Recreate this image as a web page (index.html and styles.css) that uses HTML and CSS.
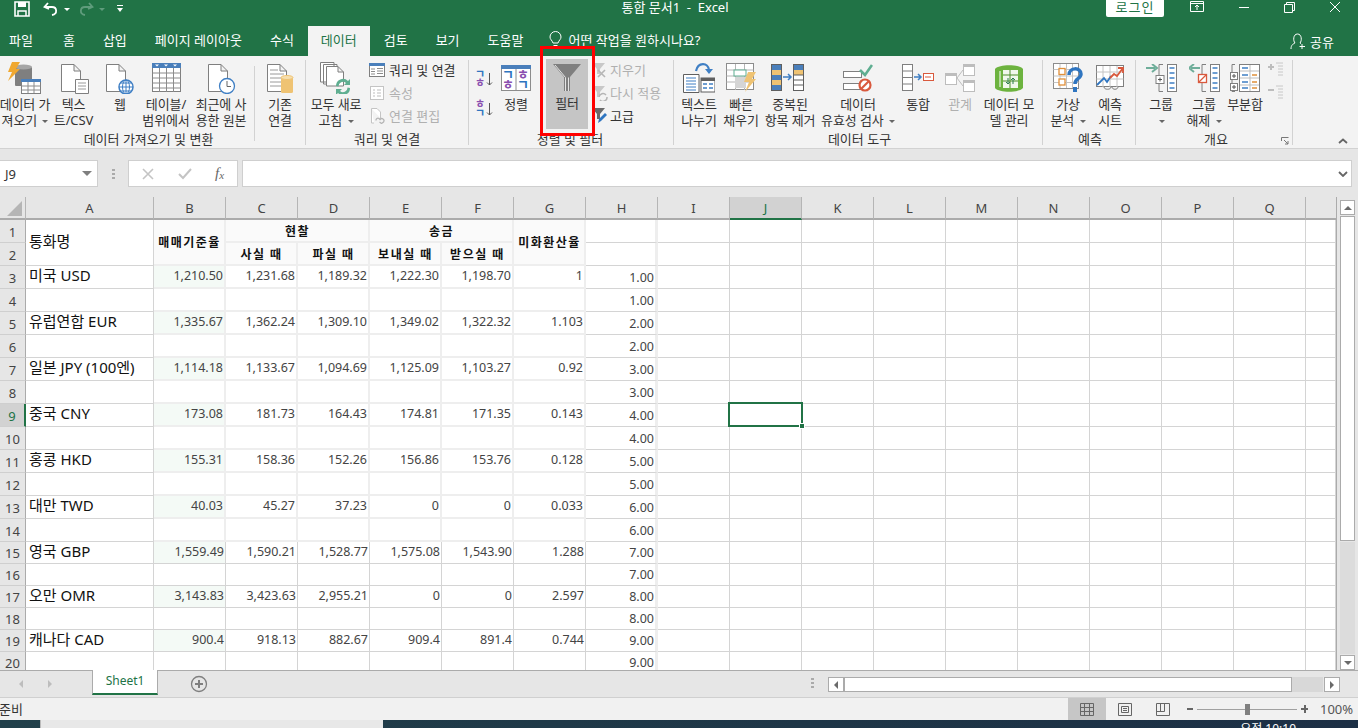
FILE: index.html
```html
<!DOCTYPE html>
<html lang="ko">
<head>
    <meta charset="UTF-8">
    <meta name="viewport" content="width=device-width, initial-scale=1.0">
    <title>통합 문서1 - Excel</title>
    <link rel="stylesheet" href="styles.css">
</head>
<body>
<div class="app">
    <!-- title bar -->
    <div class="titlebar">
        <div class="qat">
            <svg width="16" height="16" viewBox="0 0 16 16"><path d="M1 1H15V15H1Z" fill="none" stroke="#fff" stroke-width="1.6"/><path d="M4 1H12V6H4Z" fill="#fff"/><path d="M4 15V10H12V15" fill="none" stroke="#fff" stroke-width="1.5"/></svg>
            <svg width="16" height="14" viewBox="0 0 16 14" class="qat-undo"><path d="M5 1 1.5 5 6 7" fill="none" stroke="#fff" stroke-width="1.8"/><path d="M2 5H9C14 5 15 12 9 13" fill="none" stroke="#fff" stroke-width="1.8"/></svg>
            <span class="caret white"></span>
            <svg width="16" height="14" viewBox="0 0 16 14" class="qat-redo"><path d="M11 1 14.5 5 10 7" fill="none" stroke="#5f9c7c" stroke-width="1.8"/><path d="M14 5H7C2 5 1 12 7 13" fill="none" stroke="#5f9c7c" stroke-width="1.8"/></svg>
            <span class="caret dim"></span>
            <svg width="6" height="8" viewBox="0 0 6 8" class="qat-more"><path d="M0 .5H6" stroke="#fff"/><path d="M0 3H6L3 7Z" fill="#fff"/></svg>
        </div>
        <div class="doc-title">통합 문서1 &nbsp;-&nbsp; Excel</div>
        <div class="login">로그인</div>
        <div class="winbtns">
            <svg width="14" height="12" viewBox="0 0 14 12"><path d="M.5.5H13.5V10.5H.5ZM.5 2.5H13.5M7 9V4.5M5 6 7 4 9 6" fill="none" stroke="#fff"/></svg>
            <svg width="12" height="12" viewBox="0 0 12 12"><path d="M1 6.5H11" stroke="#fff" fill="none"/></svg>
            <svg width="11" height="11" viewBox="0 0 11 11"><path d="M.5 2.5H8.5V10.5H.5ZM2.5 2.5V.5H10.5V8.5H8.5" fill="none" stroke="#fff"/></svg>
            <svg width="12" height="12" viewBox="0 0 12 12"><path d="M1 1 11 11M11 1 1 11" stroke="#fff" fill="none"/></svg>
        </div>
    </div>

    <!-- ribbon tabs -->
    <div class="tabs">
        <div class="tab first">파일</div>
        <div class="tab">홈</div>
        <div class="tab">삽입</div>
        <div class="tab">페이지 레이아웃</div>
        <div class="tab">수식</div>
        <div class="tab active">데이터</div>
        <div class="tab">검토</div>
        <div class="tab">보기</div>
        <div class="tab">도움말</div>
        <div class="tell-me">
            <svg width="13" height="18" viewBox="0 0 13 18"><path d="M4 12C3 9 1 8.5 1 6A5.5 5.5 0 0 1 12 6C12 8.5 10 9 9 12ZM4.5 14.5H8.5M5.5 16.5H7.5" fill="none" stroke="#fff"/></svg>
            <span>어떤 작업을 원하시나요?</span>
        </div>
        <div class="share">
            <svg width="16" height="17" viewBox="0 0 16 17"><path d="M1 16C1 12 3 11 5 10C3 8 3 1 7.5 1S12 8 10 10L11 10.5M12 11V16M9.5 13.5H15" fill="none" stroke="#fff"/></svg>
            <span>공유</span>
        </div>
    </div>

    <!-- ribbon -->
    <div class="ribbon">
        <div class="group g1">
            <div class="group-body">
                <div class="big w50">
                    <div class="ico"><svg width="34" height="32" viewBox="0 0 34 32"><rect x="7" y="5" width="17" height="19" rx="1" fill="#7f7f7f"/><ellipse cx="15.5" cy="5" rx="8.5" ry="2.5" fill="#a5a5a5"/><path d="M4 0H12L8 7H12L0 19 4 10H0Z" fill="#f0a830"/><rect x="13.5" y="17.5" width="19" height="14" fill="#fff" stroke="#7f7f7f"/><rect x="13" y="17" width="20" height="3" fill="#4a7fbb"/><path d="M13.5 24H32.5M13.5 28H32.5M20 20V31M26 20V31" stroke="#8c8c8c" fill="none"/></svg></div>
                    <div class="lbl">데이터 가</div>
                    <div class="lbl">져오기 <i class="caret"></i></div>
                </div>
                <div class="big w47">
                    <div class="ico"><svg width="30" height="32" viewBox="0 0 30 32"><path d="M2.5 2.5H15L21.5 9V29.5H2.5ZM15 2.5V9H21.5" fill="#fff" stroke="#7f7f7f"/><path d="M16.5 17.5H29.5V31.5H16.5Z" fill="#fff" stroke="#7f7f7f"/><path d="M19 21H27M19 24H27M19 27H27" stroke="#9a9a9a" fill="none"/></svg></div>
                    <div class="lbl">텍스</div>
                    <div class="lbl">트/CSV</div>
                </div>
                <div class="big w46">
                    <div class="ico"><svg width="30" height="32" viewBox="0 0 30 32"><path d="M1.5 2.5H14L20.5 9V29.5H1.5ZM14 2.5V9H20.5" fill="#fff" stroke="#7f7f7f"/><circle cx="21" cy="25" r="7" fill="#fff" stroke="#3f7fc4" stroke-width="1.5"/><path d="M14 25H28M21 18V32M16 21H26M16 29H26" stroke="#3f7fc4" fill="none"/><ellipse cx="21" cy="25" rx="3.5" ry="7" fill="none" stroke="#3f7fc4"/></svg></div>
                    <div class="lbl">웹</div>
                </div>
                <div class="big w46">
                    <div class="ico"><svg width="29" height="30" viewBox="0 0 29 30"><rect x=".5" y=".5" width="28" height="28" fill="#fff" stroke="#7f7f7f"/><rect width="29" height="5" fill="#4a7fbb"/><path d="M.5 10H28.5M.5 15H28.5M.5 20H28.5M.5 25H28.5M7.5 5V29M14.5 5V29M21.5 5V29" stroke="#8c8c8c" fill="none"/><path d="M3 1.5 5 3.5 7 1.5ZM12 1.5 14 3.5 16 1.5ZM21 1.5 23 3.5 25 1.5Z" fill="#fff"/></svg></div>
                    <div class="lbl">테이블/</div>
                    <div class="lbl">범위에서</div>
                </div>
                <div class="big divided">
                    <div class="ico"><svg width="30" height="32" viewBox="0 0 30 32"><path d="M2.5 2.5H15L21.5 9V29.5H2.5ZM15 2.5V9H21.5" fill="#fff" stroke="#7f7f7f"/><circle cx="21" cy="24" r="7.5" fill="#fff" stroke="#3f7fc4" stroke-width="1.3"/><path d="M21 19V24.5H25" fill="none" stroke="#666"/></svg></div>
                    <div class="lbl">최근에 사</div>
                    <div class="lbl">용한 원본</div>
                </div>
                <div class="big w50">
                    <div class="ico"><svg width="28" height="32" viewBox="0 0 28 32"><path d="M1.5 2.5H14L20.5 9V29.5H1.5ZM14 2.5V9H20.5" fill="#fff" stroke="#7f7f7f"/><path d="M4 8H12M4 12H18M4 16H18M4 20H16M4 24H16" stroke="#9a9a9a" fill="none"/><rect x="15" y="15" width="12" height="16" rx="1.5" fill="#efc373"/><ellipse cx="21" cy="15.5" rx="6" ry="2" fill="#f7dfae" stroke="#efc373"/></svg></div>
                    <div class="lbl">기존</div>
                    <div class="lbl">연결</div>
                </div>
            </div>
            <div class="group-label">데이터 가져오기 및 변환</div>
        </div>

        <div class="group g2">
            <div class="group-body">
                <div class="big w60">
                    <div class="ico"><svg width="32" height="32" viewBox="0 0 32 32"><path d="M.5.5H14V20H.5ZM3.5 2.5H17V22H3.5Z" fill="#fff" stroke="#7f7f7f"/><path d="M6.5 4.5H18L23.5 10V24H6.5ZM18 4.5V10H23.5" fill="#fff" stroke="#7f7f7f"/><path d="M16 24A7 7 0 0 1 28 19L30 17V23H24L26 21A4.5 4.5 0 0 0 18.5 24.5Z" fill="#5fae91"/><path d="M30 26A7 7 0 0 1 18 31L16 33V27H22L20 29A4.5 4.5 0 0 0 27.5 25.5Z" fill="#5fae91"/></svg></div>
                    <div class="lbl">모두 새로</div>
                    <div class="lbl">고침 <i class="caret"></i></div>
                </div>
                <div class="small-col after-big">
                    <div class="small"><svg width="16" height="14" viewBox="0 0 16 14"><rect x=".5" y=".5" width="15" height="13" fill="#fff" stroke="#7f7f7f"/><rect width="16" height="3" fill="#4a7fbb"/><path d="M2 6H6M2 8.5H6M2 11H6M8 5.5H14M8 8H14M8 10.5H14" stroke="#8c8c8c" fill="none"/></svg><span>쿼리 및 연결</span></div>
                    <div class="small off"><svg width="16" height="16" viewBox="0 0 16 16"><rect x="1.5" y="1.5" width="13" height="13" fill="#fff" stroke="#c4c4c4"/><path d="M4 5H6M8 5H12M4 8H6M8 8H12M4 11H6M8 11H12" stroke="#bdbdbd" fill="none"/></svg><span>속성</span></div>
                    <div class="small off"><svg width="16" height="16" viewBox="0 0 16 16"><path d="M2.5.5H8L11.5 4V10M5 15H2.5V.5" fill="#fff" stroke="#c4c4c4"/><path d="M7 12.5A2 2 0 0 1 10 10.5L11 11.5A2 2 0 0 1 14.5 14L12.5 15.5 10.5 14" fill="none" stroke="#b5b5b5" stroke-width="1.3"/></svg><span>연결 편집</span></div>
                </div>
            </div>
            <div class="group-label">쿼리 및 연결</div>
        </div>

        <div class="group g3">
            <div class="group-body">
                <div class="sort-col">
                    <svg width="18" height="18" viewBox="0 0 18 18"><text x="-1" y="8" class="jamo blue">ㄱ</text><text x="-1" y="17" class="jamo purple">ㅎ</text><path d="M13.5 3V15M11 12.5 13.5 15 16 12.5" stroke="#555" fill="none"/></svg>
                    <svg width="18" height="18" viewBox="0 0 18 18"><text x="-1" y="8" class="jamo purple">ㅎ</text><text x="-1" y="17" class="jamo blue">ㄱ</text><path d="M13.5 3V15M11 12.5 13.5 15 16 12.5" stroke="#555" fill="none"/></svg>
                </div>
                <div class="big sort-big">
                    <div class="ico"><svg width="30" height="26" viewBox="0 0 30 26"><rect x=".5" y=".5" width="29" height="25" fill="#fff" stroke="#8c8c8c"/><rect width="30" height="4" fill="#4a7fbb"/><path d="M15 4V26" stroke="#8c8c8c"/><text x="1" y="14" class="jamo-b blue">ㄱ</text><text x="1" y="24" class="jamo-b purple">ㅎ</text><text x="16" y="14" class="jamo-b purple">ㅎ</text><text x="16" y="24" class="jamo-b blue">ㄱ</text></svg></div>
                    <div class="lbl">정렬</div>
                </div>
                <div class="big filter-btn">
                    <div class="ico"><svg width="28" height="28" viewBox="0 0 28 28"><path d="M0 0H28L17 13V27H11V13Z" fill="#7f7f7f"/><path d="M2 1 12.5 13.5V27M15.5 27V13.5" fill="none" stroke="#e4e4e4"/></svg></div>
                    <div class="lbl">필터</div>
                </div>
                <div class="small-col">
                    <div class="small off"><svg width="16" height="16" viewBox="0 0 16 16"><path d="M0 1H13L8 7V12H5V7Z" fill="#c8c8c8"/><path d="M6 8 13 15M13 8 6 15" stroke="#b5b5b5" stroke-width="1.6"/></svg><span>지우기</span></div>
                    <div class="small off"><svg width="16" height="16" viewBox="0 0 16 16"><path d="M0 1H13L8 7V12H5V7Z" fill="#c8c8c8"/><path d="M7 12A4 4 0 0 1 14 10M15 12A4 4 0 0 1 8 15" stroke="#b5b5b5" stroke-width="1.5" fill="none"/></svg><span>다시 적용</span></div>
                    <div class="small"><svg width="16" height="16" viewBox="0 0 16 16"><path d="M0 0H13L8 6V11H5V6Z" fill="#6a6a6a"/><path d="M6 15 7 11 13 5 15 7 9 13Z" fill="#2f75c0"/></svg><span>고급</span></div>
                </div>
            </div>
            <div class="group-label">정렬 및 필터</div>
        </div>

        <div class="group g4">
            <div class="group-body">
                <div class="big w44">
                    <div class="ico"><svg width="32" height="30" viewBox="0 0 32 30"><path d="M.5 11.5H16V29.5H.5Z" fill="#fff" stroke="#5f5f5f"/><path d="M3 15H13M3 18H13M3 21H13M3 24H13M3 27H13" stroke="#3f7fc4" fill="none"/><rect x="18" y="15" width="14" height="14" fill="#fff" stroke="#5f5f5f"/><rect x="18" y="15" width="14" height="3" fill="#5f5f5f"/><path d="M20 21H24M26 21H30M20 25H24M26 25H30" stroke="#3f7fc4" stroke-width="1.5" fill="none"/><path d="M13 8C15-1 25-1 26 7" fill="none" stroke="#3f7fc4" stroke-width="2.2"/><path d="M22 6H30L26 11Z" fill="#3f7fc4"/></svg></div>
                    <div class="lbl">텍스트</div>
                    <div class="lbl">나누기</div>
                </div>
                <div class="big w40">
                    <div class="ico"><svg width="31" height="30" viewBox="0 0 31 30"><rect x=".5" y=".5" width="27" height="26" fill="#fff" stroke="#8c8c8c"/><path d="M.5 7H27.5M.5 13H27.5M.5 19H27.5M9.5 1V27M18.5 1V27" stroke="#b5b5b5" fill="none"/><rect x="8" y="7" width="12" height="6" fill="#fff" stroke="#5fae91"/><rect x="9" y="14" width="11" height="11" fill="#d5d5d5"/><path d="M22 9H30L26 16H30L19 29 23 19H18Z" fill="#efc373"/></svg></div>
                    <div class="lbl">빠른</div>
                    <div class="lbl">채우기</div>
                </div>
                <div class="big w58">
                    <div class="ico"><svg width="38" height="28" viewBox="0 0 38 28"><rect x=".5" y=".5" width="10" height="26" fill="#fff" stroke="#5f5f5f"/><rect x="1" y="1" width="9" height="5" fill="#4a7fbb"/><rect x="1" y="6" width="9" height="5" fill="#efc373"/><rect x="1" y="11" width="9" height="5" fill="#4a7fbb"/><rect x="1" y="16" width="9" height="5" fill="#efc373"/><rect x="1" y="21" width="9" height="5" fill="#4a7fbb"/><path d="M12 13H20M17 10 20 13 17 16" stroke="#3f7fc4" stroke-width="1.5" fill="none"/><rect x="22.5" y=".5" width="10" height="26" fill="#fff" stroke="#5f5f5f"/><rect x="23" y="1" width="9" height="5" fill="#4a7fbb"/><rect x="23" y="6" width="9" height="5" fill="#efc373"/><path d="M23 16H32M23 21H32M23 11H32" stroke="#5f5f5f"/></svg></div>
                    <div class="lbl">중복된</div>
                    <div class="lbl">항목 제거</div>
                </div>
                <div class="big w78">
                    <div class="ico"><svg width="30" height="28" viewBox="0 0 30 28"><rect x=".5" y="7.5" width="18" height="6" fill="#fff" stroke="#7f7f7f"/><rect x=".5" y="19.5" width="18" height="6" fill="#fff" stroke="#7f7f7f"/><path d="M17 6 22 11 29 1" fill="none" stroke="#5fae91" stroke-width="2.6"/><circle cx="22" cy="21" r="5.5" fill="#fff" stroke="#d9593d" stroke-width="2.2"/><path d="M18 25 26 17" stroke="#d9593d" stroke-width="2.2"/></svg></div>
                    <div class="lbl">데이터</div>
                    <div class="lbl">유효성 검사 <i class="caret"></i></div>
                </div>
                <div class="big w42">
                    <div class="ico"><svg width="32" height="28" viewBox="0 0 32 28"><rect x=".5" y=".5" width="10" height="26" fill="#fff" stroke="#7f7f7f"/><path d="M1 7H10M1 13.5H10M1 20H10" stroke="#7f7f7f"/><path d="M12 13H19M16 10 19 13 16 16" stroke="#3f7fc4" stroke-width="1.5" fill="none"/><rect x="21.5" y="9.5" width="10" height="7" fill="#fff" stroke="#d9593d"/><path d="M23 13H29" stroke="#d9593d"/></svg></div>
                    <div class="lbl">통합</div>
                </div>
                <div class="big w42 muted">
                    <div class="ico"><svg width="30" height="28" viewBox="0 0 30 28"><rect x=".5" y="9.5" width="11" height="11" fill="#fff" stroke="#bdbdbd"/><rect width="12" height="3" y="9" fill="#bdbdbd"/><rect x="18.5" y=".5" width="11" height="11" fill="#fff" stroke="#bdbdbd"/><rect width="12" height="3" x="18" fill="#bdbdbd"/><rect x="18.5" y="16.5" width="11" height="11" fill="#fff" stroke="#bdbdbd"/><rect width="12" height="3" x="18" y="16" fill="#bdbdbd"/><path d="M18 6 12 14 18 22" fill="none" stroke="#bdbdbd"/></svg></div>
                    <div class="lbl">관계</div>
                </div>
                <div class="big w56">
                    <div class="ico"><svg width="28" height="30" viewBox="0 0 28 30"><path d="M0 6C4 1 24 1 28 6V25C24 30 4 30 0 25Z" fill="#6db33f"/><path d="M8 7H23V25H8Z" fill="#fff" opacity=".9"/><path d="M8 12H23M8 18H23M15 7V25" stroke="#4f8f2a" fill="none"/><path d="M5 8V24" stroke="#fff"/><path d="M13 15V21M11 19 13 21 15 19M18 21V15M16 17 18 15 20 17" stroke="#2f7f4f" fill="none"/></svg></div>
                    <div class="lbl">데이터 모</div>
                    <div class="lbl">델 관리</div>
                </div>
            </div>
            <div class="group-label">데이터 도구</div>
        </div>

        <div class="group g5">
            <div class="group-body">
                <div class="big w46">
                    <div class="ico"><svg width="30" height="30" viewBox="0 0 30 30"><rect x=".5" y=".5" width="25" height="25" fill="#fff" stroke="#8c8c8c"/><path d="M.5 6.5H25.5M.5 13H25.5M.5 19.5H25.5M7 1V25M13.5 1V25M19.5 1V25" stroke="#c4c4c4" fill="none"/><rect x="6" y="5.5" width="6" height="6" fill="#fff" stroke="#e0903a" stroke-width="1.3"/><rect x="6" y="16" width="6" height="6" fill="#fff" stroke="#e0903a" stroke-width="1.3"/><path d="M16 12C16 4 28 4 28 11C28 16 22 15 22 21" fill="none" stroke="#2f75c0" stroke-width="3.5"/><rect x="20" y="24" width="4" height="5" fill="#2f75c0"/></svg></div>
                    <div class="lbl">가상</div>
                    <div class="lbl">분석 <i class="caret"></i></div>
                </div>
                <div class="big w38">
                    <div class="ico"><svg width="28" height="26" viewBox="0 0 28 26"><rect x=".5" y=".5" width="27" height="21" fill="#fff" stroke="#7f7f7f"/><path d="M.5 7H27.5M.5 14H27.5M7 1V22M14 1V22M21 1V22" stroke="#c4c4c4" fill="none"/><path d="M1 20 8 13 11 17 15 11" fill="none" stroke="#2f75c0" stroke-width="1.8"/><path d="M14 13 18 9 21 11 27 3M22 3H27V8" fill="none" stroke="#d9593d" stroke-width="1.8"/><path d="M8 22C8 25 15 25 15 22M16 22C16 25 22 25 22 22" fill="none" stroke="#7f7f7f"/></svg></div>
                    <div class="lbl">예측</div>
                    <div class="lbl">시트</div>
                </div>
            </div>
            <div class="group-label">예측</div>
        </div>

        <div class="group g6">
            <div class="group-body">
                <div class="big w42">
                    <div class="ico"><svg width="31" height="28" viewBox="0 0 31 28"><path d="M0 4H9M6 0 11 4 6 8" fill="none" stroke="#6fae9a" stroke-width="2"/><path d="M17 .5H13V27.5H17" fill="none" stroke="#7f7f7f"/><rect x="10" y="11.5" width="8" height="8" fill="#fff" stroke="#7f7f7f"/><path d="M12 15.5H16M14 13.5V17.5" stroke="#555"/><rect x="21.5" y=".5" width="9" height="27" fill="#fff" stroke="#7f7f7f"/><path d="M23.5 4H28.5M23.5 9H28.5M23.5 14H28.5M23.5 19H28.5M23.5 24H28.5" stroke="#3f7fc4" stroke-width="1.3"/></svg></div>
                    <div class="lbl">그룹</div>
                    <div class="lbl"><i class="caret"></i></div>
                </div>
                <div class="big w44">
                    <div class="ico"><svg width="31" height="28" viewBox="0 0 31 28"><path d="M11 4H2M5 0 0 4 5 8" fill="none" stroke="#6fae9a" stroke-width="2"/><path d="M17 .5H13V27.5H17" fill="none" stroke="#7f7f7f"/><rect x="9.5" y="10.5" width="8" height="8" fill="#fff" stroke="#d9593d" stroke-width="1.3"/><path d="M10 18 17 11" stroke="#d9593d" stroke-width="1.3"/><rect x="21.5" y=".5" width="9" height="27" fill="#fff" stroke="#7f7f7f"/><path d="M23.5 4H28.5M23.5 9H28.5M23.5 14H28.5M23.5 19H28.5M23.5 24H28.5" stroke="#3f7fc4" stroke-width="1.3"/></svg></div>
                    <div class="lbl">그룹</div>
                    <div class="lbl">해제 <i class="caret"></i></div>
                </div>
                <div class="big w38">
                    <div class="ico"><svg width="30" height="28" viewBox="0 0 30 28"><path d="M5 .5H2V27.5H5" fill="none" stroke="#7f7f7f"/><rect x=".5" y="8.5" width="7" height="7" fill="#fff" stroke="#7f7f7f"/><path d="M2 12H6M4 10V14" stroke="#555"/><rect x=".5" y="19.5" width="7" height="7" fill="#fff" stroke="#7f7f7f"/><path d="M2 23H6M4 21V25" stroke="#555"/><rect x="9.5" y=".5" width="20" height="27" fill="#fff" stroke="#7f7f7f"/><path d="M20 1V27M10 7H29M10 14H29M10 21H29" stroke="#bdbdbd"/><path d="M12 4H18M12 11H18M12 18H18M12 24H18" stroke="#3f7fc4" stroke-width="1.3"/><path d="M22 11H27M22 18H27M22 24H27" stroke="#e0903a" stroke-width="1.3"/></svg></div>
                    <div class="lbl">부분합</div>
                </div>
                <div class="outline-col">
                    <svg width="16" height="15" viewBox="0 0 16 15"><path d="M0 5H6M3 2V8" stroke="#bdbdbd" stroke-width="2"/><path d="M8 1H15M10 4H15M10 7H15M10 10H15M10 13H15" stroke="#c8c8c8"/></svg>
                    <svg width="16" height="15" viewBox="0 0 16 15"><path d="M0 5H6" stroke="#bdbdbd" stroke-width="2"/><path d="M8 1H15M10 4H15M10 7H15M10 10H15M10 13H15" stroke="#c8c8c8"/></svg>
                </div>
            </div>
            <div class="group-label">개요</div>
            <svg class="launcher" width="8" height="8" viewBox="0 0 8 8"><path d="M.5 4V.5H7.5M3 3 7 7M4 7H7V4" fill="none" stroke="#777"/></svg>
        </div>
        <svg class="collapse" width="10" height="6" viewBox="0 0 10 6"><path d="M1 5 5 1.5 9 5" fill="none" stroke="#666" stroke-width="1.8"/></svg>
    </div>

    <!-- formula bar -->
    <div class="formula-row">
        <div class="namebox"><span>J9</span><i class="caret grey"></i></div>
        <div class="dots fx-dots"></div>
        <div class="fx-btns">
            <svg width="12" height="12" viewBox="0 0 12 12"><path d="M1 1 11 11M11 1 1 11" stroke="#c4c4c4" stroke-width="1.6"/></svg>
            <svg width="14" height="12" viewBox="0 0 14 12"><path d="M1 6 5 10 13 1" stroke="#c4c4c4" stroke-width="2" fill="none"/></svg>
            <span class="fx">f<sub>x</sub></span>
        </div>
        <div class="formula-input"><svg width="10" height="6" viewBox="0 0 10 6"><path d="M1 1 5 5 9 1" fill="none" stroke="#666" stroke-width="1.8"/></svg></div>
    </div>

    <!-- sheet -->
    <div class="sheet-area">
        <div class="sheet-clip">
            <table class="sheet">
                <colgroup>
                    <col class="c-head"><col class="c-a"><col span="16" class="c-n"><col class="c-last">
                </colgroup>
                <thead>
                    <tr><th class="corner"><span></span></th><th>A</th><th>B</th><th>C</th><th>D</th><th>E</th><th>F</th><th>G</th><th>H</th><th>I</th><th class="cur">J</th><th>K</th><th>L</th><th>M</th><th>N</th><th>O</th><th>P</th><th>Q</th><th></th></tr>
                </thead>
                <tbody>
                    <tr><th>1</th><td rowspan="2" class="name">통화명</td><td rowspan="2" class="hd">매매기준율</td><td colspan="2" class="hd">현찰</td><td colspan="2" class="hd">송금</td><td rowspan="2" class="hd">미화환산율</td><td class="h"></td><td></td><td></td><td></td><td></td><td></td><td></td><td></td><td></td><td></td><td></td></tr>
                    <tr><th>2</th><td class="hd">사실 때</td><td class="hd">파실 때</td><td class="hd">보내실 때</td><td class="hd">받으실 때</td><td class="h"></td><td></td><td></td><td></td><td></td><td></td><td></td><td></td><td></td><td></td><td></td></tr>
                    <tr><th>3</th><td class="name">미국 USD</td><td class="num mint">1,210.50</td><td class="num">1,231.68</td><td class="num">1,189.32</td><td class="num">1,222.30</td><td class="num">1,198.70</td><td class="num">1</td><td class="h">1.00</td><td></td><td></td><td></td><td></td><td></td><td></td><td></td><td></td><td></td><td></td></tr>
                    <tr><th>4</th><td class="name"></td><td class="num"></td><td class="num"></td><td class="num"></td><td class="num"></td><td class="num"></td><td class="num"></td><td class="h">1.00</td><td></td><td></td><td></td><td></td><td></td><td></td><td></td><td></td><td></td><td></td></tr>
                    <tr><th>5</th><td class="name">유럽연합 EUR</td><td class="num mint">1,335.67</td><td class="num">1,362.24</td><td class="num">1,309.10</td><td class="num">1,349.02</td><td class="num">1,322.32</td><td class="num">1.103</td><td class="h">2.00</td><td></td><td></td><td></td><td></td><td></td><td></td><td></td><td></td><td></td><td></td></tr>
                    <tr><th>6</th><td class="name"></td><td class="num"></td><td class="num"></td><td class="num"></td><td class="num"></td><td class="num"></td><td class="num"></td><td class="h">2.00</td><td></td><td></td><td></td><td></td><td></td><td></td><td></td><td></td><td></td><td></td></tr>
                    <tr><th>7</th><td class="name">일본 JPY (100엔)</td><td class="num mint">1,114.18</td><td class="num">1,133.67</td><td class="num">1,094.69</td><td class="num">1,125.09</td><td class="num">1,103.27</td><td class="num">0.92</td><td class="h">3.00</td><td></td><td></td><td></td><td></td><td></td><td></td><td></td><td></td><td></td><td></td></tr>
                    <tr><th>8</th><td class="name"></td><td class="num"></td><td class="num"></td><td class="num"></td><td class="num"></td><td class="num"></td><td class="num"></td><td class="h">3.00</td><td></td><td></td><td></td><td></td><td></td><td></td><td></td><td></td><td></td><td></td></tr>
                    <tr><th class="cur-row">9</th><td class="name">중국 CNY</td><td class="num mint">173.08</td><td class="num">181.73</td><td class="num">164.43</td><td class="num">174.81</td><td class="num">171.35</td><td class="num">0.143</td><td class="h">4.00</td><td></td><td class="selected"><div class="sel-box"><i></i></div></td><td></td><td></td><td></td><td></td><td></td><td></td><td></td><td></td><td></td></tr>
                    <tr><th>10</th><td class="name"></td><td class="num"></td><td class="num"></td><td class="num"></td><td class="num"></td><td class="num"></td><td class="num"></td><td class="h">4.00</td><td></td><td></td><td></td><td></td><td></td><td></td><td></td><td></td><td></td><td></td></tr>
                    <tr><th>11</th><td class="name">홍콩 HKD</td><td class="num mint">155.31</td><td class="num">158.36</td><td class="num">152.26</td><td class="num">156.86</td><td class="num">153.76</td><td class="num">0.128</td><td class="h">5.00</td><td></td><td></td><td></td><td></td><td></td><td></td><td></td><td></td><td></td><td></td></tr>
                    <tr><th>12</th><td class="name"></td><td class="num"></td><td class="num"></td><td class="num"></td><td class="num"></td><td class="num"></td><td class="num"></td><td class="h">5.00</td><td></td><td></td><td></td><td></td><td></td><td></td><td></td><td></td><td></td><td></td></tr>
                    <tr><th>13</th><td class="name">대만 TWD</td><td class="num mint">40.03</td><td class="num">45.27</td><td class="num">37.23</td><td class="num">0</td><td class="num">0</td><td class="num">0.033</td><td class="h">6.00</td><td></td><td></td><td></td><td></td><td></td><td></td><td></td><td></td><td></td><td></td></tr>
                    <tr><th>14</th><td class="name"></td><td class="num"></td><td class="num"></td><td class="num"></td><td class="num"></td><td class="num"></td><td class="num"></td><td class="h">6.00</td><td></td><td></td><td></td><td></td><td></td><td></td><td></td><td></td><td></td><td></td></tr>
                    <tr class="short"><th>15</th><td class="name">영국 GBP</td><td class="num mint">1,559.49</td><td class="num">1,590.21</td><td class="num">1,528.77</td><td class="num">1,575.08</td><td class="num">1,543.90</td><td class="num">1.288</td><td class="h">7.00</td><td></td><td></td><td></td><td></td><td></td><td></td><td></td><td></td><td></td><td></td></tr>
                    <tr class="short"><th>16</th><td class="name"></td><td class="num"></td><td class="num"></td><td class="num"></td><td class="num"></td><td class="num"></td><td class="num"></td><td class="h">7.00</td><td></td><td></td><td></td><td></td><td></td><td></td><td></td><td></td><td></td><td></td></tr>
                    <tr class="short"><th>17</th><td class="name">오만 OMR</td><td class="num mint">3,143.83</td><td class="num">3,423.63</td><td class="num">2,955.21</td><td class="num">0</td><td class="num">0</td><td class="num">2.597</td><td class="h">8.00</td><td></td><td></td><td></td><td></td><td></td><td></td><td></td><td></td><td></td><td></td></tr>
                    <tr class="short"><th>18</th><td class="name"></td><td class="num"></td><td class="num"></td><td class="num"></td><td class="num"></td><td class="num"></td><td class="num"></td><td class="h">8.00</td><td></td><td></td><td></td><td></td><td></td><td></td><td></td><td></td><td></td><td></td></tr>
                    <tr class="short"><th>19</th><td class="name">캐나다 CAD</td><td class="num mint">900.4</td><td class="num">918.13</td><td class="num">882.67</td><td class="num">909.4</td><td class="num">891.4</td><td class="num">0.744</td><td class="h">9.00</td><td></td><td></td><td></td><td></td><td></td><td></td><td></td><td></td><td></td><td></td></tr>
                    <tr class="short"><th>20</th><td class="name"></td><td class="num"></td><td class="num"></td><td class="num"></td><td class="num"></td><td class="num"></td><td class="num"></td><td class="h">9.00</td><td></td><td></td><td></td><td></td><td></td><td></td><td></td><td></td><td></td><td></td></tr>
                </tbody>
            </table>
        </div>
        <div class="vscroll">
            <div class="sb-btn"><i class="tri up"></i></div>
            <div class="sb-thumb"></div>
            <div class="sb-rest"></div>
            <div class="sb-btn"><i class="tri down"></i></div>
        </div>
    </div>

    <!-- sheet tabs and horizontal scrollbar -->
    <div class="sheet-tabs">
        <i class="tri left pale nav-l"></i>
        <i class="tri right pale nav-r"></i>
        <div class="sheet-tab">Sheet1</div>
        <svg class="add-sheet" width="18" height="18" viewBox="0 0 18 18"><circle cx="9" cy="9" r="7.5" fill="none" stroke="#7f7f7f" stroke-width="1.3"/><path d="M5 9H13M9 5V13" stroke="#7f7f7f" stroke-width="2"/></svg>
        <div class="dots tab-dots"></div>
        <div class="hscroll">
            <div class="sb-btn wide"><i class="tri left"></i></div>
            <div class="h-thumb"></div>
            <div class="h-rest"></div>
            <div class="sb-btn wide"><i class="tri right"></i></div>
        </div>
    </div>

    <!-- status bar -->
    <div class="statusbar">
        <span class="ready">준비</span>
        <div class="views">
            <div class="view on"><svg width="14" height="13" viewBox="0 0 14 13"><path d="M.5.5H13.5V12.5H.5ZM.5 4.5H13.5M.5 8.5H13.5M4.5.5V12.5M9.5.5V12.5" fill="none" stroke="#666"/></svg></div>
            <div class="view"><svg width="14" height="13" viewBox="0 0 14 13"><path d="M.5.5H13.5V12.5H.5ZM3.5 3.5H10.5V9.5H3.5ZM5 5.5H9M5 7.5H9" fill="none" stroke="#666"/></svg></div>
            <div class="view"><svg width="14" height="13" viewBox="0 0 14 13"><path d="M.5.5H13.5V12.5H.5ZM.5 8.5H8.5V.5M4.5.5V8.5" fill="none" stroke="#666"/></svg></div>
        </div>
        <div class="zoom">
            <i class="minus"></i>
            <div class="slider"><b></b></div>
            <i class="plus"></i>
            <span>100%</span>
        </div>
    </div>

    <!-- bit of the desktop taskbar -->
    <div class="taskbar">
        <div class="task-search"></div>
        <span class="clock">오전 10:10</span>
    </div>

    <div class="red-box"></div>
</div>
</body>
</html>
```

FILE: styles.css
```css
* {
    margin: 0;
    padding: 0;
    box-sizing: border-box;
}

html, body {
    height: 100%;
    overflow: hidden;
}

body {
    font-family: "Noto Sans", "Noto Sans CJK KR", sans-serif;
    font-size: 13px;
    color: #333;
    background: #e6e6e6;
}

.app {
    position: relative;
    width: 1358px;
    height: 728px;
    display: flex;
    flex-direction: column;
    overflow: hidden;
}

/* title bar */
.titlebar {
    height: 26px;
    display: flex;
    background: #217346;
    color: #fff;
}

.qat {
    width: 130px;
    display: flex;
    align-items: center;
    height: 18px;
    padding-left: 14px;
}

.qat-undo {
    margin-left: 13px;
}

.qat-redo {
    margin-left: 8px;
}

.qat-more {
    margin-left: 12px;
}

.caret {
    display: inline-block;
    width: 0;
    height: 0;
    border-left: 3px solid transparent;
    border-right: 3px solid transparent;
    border-top: 3px solid #666;
    vertical-align: middle;
    margin-left: 2px;
}

.caret.white {
    border-top-color: #fff;
    margin-left: 5px;
}

.caret.dim {
    border-top-color: #5f9c7c;
    margin-left: 5px;
}

.caret.grey {
    border-left-width: 5px;
    border-right-width: 5px;
    border-top-width: 5px;
    border-top-color: #7f7f7f;
}

.doc-title {
    flex: 1;
    padding-left: 114px;
    text-align: center;
    line-height: 15px;
}

.login {
    width: 58px;
    height: 17px;
    background: #fff;
    color: #217346;
    border-radius: 0 0 2px 2px;
    text-align: center;
    line-height: 15px;
    letter-spacing: 1px;
}

.winbtns {
    width: 194px;
    display: flex;
    align-items: center;
    height: 14px;
    padding-left: 26px;
    gap: 34px;
}

/* ribbon tabs */
.tabs {
    height: 30px;
    display: flex;
    background: #217346;
    color: #fff;
}

.tab {
    padding: 0 14px;
    line-height: 29px;
}

.tab.first {
    padding: 0 16px 0 9px;
}

.tab.active {
    background: #f3f3f3;
    color: #217346;
    padding: 0 13px;
}

.tell-me {
    display: flex;
    align-items: flex-start;
    gap: 6px;
    margin-left: 12px;
    padding-top: 5px;
    line-height: 18px;
}

.share {
    margin-left: auto;
    display: flex;
    gap: 4px;
    align-items: center;
    padding-right: 24px;
    height: 30px;
}

/* ribbon */
.ribbon {
    position: relative;
    height: 93px;
    padding-top: 4px;
    display: flex;
    background: #f3f3f3;
    border-bottom: 1px solid #d2d2d2;
}

.group {
    position: relative;
    height: 85px;
    border-right: 1px solid #d2d2d2;
}

.g1 { width: 306px; }
.g2 { width: 163px; }
.g3 { width: 205px; }
.g4 { width: 369px; padding-left: 3px; }
.g5 { width: 93px; padding-left: 2px; }
.g6 { width: 157px; padding-left: 4px; }

.group-body {
    display: flex;
    height: 69px;
}

.group-label {
    height: 17px;
    margin-top: 2px;
    line-height: 17px;
    text-align: center;
    white-space: nowrap;
}

.g1 .group-label { padding-right: 8px; }
.g3 .group-label { padding-right: 2px; }

.big {
    flex: none;
    display: flex;
    flex-direction: column;
    align-items: center;
    white-space: nowrap;
}

.big .ico {
    height: 36px;
    display: flex;
    align-items: center;
    justify-content: center;
}

.lbl {
    height: 16px;
    line-height: 16px;
    letter-spacing: -.1px;
}

.w38 { width: 38px; }
.w40 { width: 40px; }
.w42 { width: 42px; }
.w44 { width: 44px; }
.w46 { width: 46px; }
.w47 { width: 47px; }
.w50 { width: 50px; }
.w56 { width: 56px; }
.w58 { width: 58px; }
.w60 { width: 60px; }
.w78 { width: 78px; }

.divided {
    width: 66px;
    position: relative;
    padding-right: 2px;
}

.divided::after {
    content: "";
    position: absolute;
    right: 0;
    top: 6px;
    bottom: -12px;
    border-right: 1px solid #d2d2d2;
}

.muted .lbl {
    color: #b0b0b0;
}

.small-col {
    display: flex;
    flex-direction: column;
    margin-top: -2px;
}

.after-big {
    margin-left: 3px;
}

.small {
    display: flex;
    align-items: center;
    gap: 4px;
    height: 23px;
    white-space: nowrap;
}

.small svg {
    flex: none;
}

.g3 .small {
    gap: 2px;
}

.small.off span {
    color: #b0b0b0;
}

.sort-col {
    width: 31px;
    padding: 10px 0 0 7px;
    display: flex;
    flex-direction: column;
    gap: 12px;
}

.sort-col svg,
.sort-big svg {
    overflow: visible;
}

.jamo {
    font-size: 11px;
    font-weight: 700;
}

.jamo-b {
    font-size: 13px;
    font-weight: 700;
}

.blue { fill: #2f75c0; }
.purple { fill: #8a4fb0; }

.sort-big {
    width: 32px;
    margin-right: 14px;
}

.filter-btn {
    width: 42px;
    height: 70px;
    margin-top: -1px;
    margin-right: 4px;
    background: #c5c5c5;
}

.filter-btn .ico {
    padding-top: 1px;
}

.outline-col {
    display: flex;
    flex-direction: column;
    gap: 8px;
    margin-left: 4px;
    margin-top: 2px;
}

.launcher {
    position: absolute;
    right: 3px;
    bottom: 0;
}

.collapse {
    position: absolute;
    right: 10px;
    bottom: 4px;
}

/* formula bar */
.formula-row {
    height: 48px;
    padding-top: 11px;
    display: flex;
    align-items: flex-start;
    background: #e6e6e6;
}

.namebox {
    width: 99px;
    height: 27px;
    padding: 0 5px;
    margin-left: -1px;
    display: flex;
    align-items: center;
    justify-content: space-between;
    background: #fff;
    border: 1px solid #cfcfcf;
}

.dots {
    width: 3px;
    height: 10px;
    background: repeating-linear-gradient(#aaa 0 2px, transparent 2px 4px);
}

.fx-dots {
    margin: 9px 14px 0 14px;
}

.fx-btns {
    width: 110px;
    height: 27px;
    margin-left: -1px;
    display: flex;
    align-items: center;
    gap: 24px;
    padding-left: 13px;
    background: #fff;
    border: 1px solid #cfcfcf;
}

.fx {
    font-family: "Liberation Serif", serif;
    font-style: italic;
    font-size: 15px;
    color: #666;
    margin-left: -1px;
}

.fx sub {
    font-size: 11px;
    vertical-align: -1px;
}

.formula-input {
    width: 1110px;
    height: 27px;
    margin-left: 4px;
    padding-right: 3px;
    display: flex;
    align-items: center;
    justify-content: flex-end;
    background: #fff;
    border: 1px solid #cfcfcf;
}

/* sheet */
.sheet-area {
    height: 473px;
    display: flex;
    background: #e6e6e6;
}

.sheet-clip {
    width: 1337px;
    height: 473px;
    overflow: hidden;
    background: #fff;
    border-right: 1px solid #ababab;
}

.sheet {
    width: 1336px;
    table-layout: fixed;
    border-collapse: separate;
    border-spacing: 0;
}

.c-head { width: 26px; }
.c-a { width: 128px; }
.c-n { width: 72px; }
.c-last { width: 30px; }

.sheet thead th {
    height: 23px;
    background: #e6e6e6;
    border-right: 1px solid #b5b5b5;
    border-bottom: 2px solid #ababab;
    font-weight: 400;
    color: #444;
}

.sheet thead th:last-child {
    border-right: 0;
}

.sheet thead th.cur {
    background: #d2d2d2;
    color: #217346;
    border-bottom-color: #217346;
}

.corner {
    position: relative;
}

.corner span {
    position: absolute;
    right: 3px;
    bottom: 2px;
    width: 0;
    height: 0;
    border-left: 15px solid transparent;
    border-bottom: 15px solid #b5b5b5;
}

.sheet tbody th {
    height: 23px;
    background: #e6e6e6;
    border-right: 1px solid #ababab;
    border-bottom: 1px solid #cfcfcf;
    font-weight: 400;
    color: #444;
    line-height: 1;
    padding-top: 2px;
}

.sheet tbody th.cur-row {
    background: #d2d2d2;
    color: #217346;
    border-right: 2px solid #217346;
}

.sheet td {
    height: 23px;
    padding: 0 1px 0 2px;
    border-right: 1px solid #d4d4d4;
    border-bottom: 1px solid #d4d4d4;
    white-space: nowrap;
    overflow: hidden;
    line-height: 1;
}

.sheet .short th,
.sheet .short td {
    height: 22px;
}

.sheet .name {
    padding: 0 0 3px 3px;
    font-size: 15px;
    color: #111;
    vertical-align: middle;
}

.sheet .hd {
    padding-top: 2px;
    background: #fafafa;
    border-right: 2px solid #eee;
    border-bottom: 2px solid #eee;
    text-align: center;
    font-size: 12px;
    font-weight: 700;
    color: #111;
    letter-spacing: 1.5px;
}

.num,
.h {
    text-align: right;
    font-size: 12.5px;
    color: #444;
}

.sheet .num {
    border-right: 2px solid #eee;
    border-bottom: 2px solid #eee;
}

.sheet .h {
    border-right: 3px solid #eee;
    padding-top: 3px;
}

.sheet .short .num {
    border-right: 1px solid #d4d4d4;
    border-bottom: 1px solid #d4d4d4;
}

.sheet .short .h {
    padding-top: 2px;
}

.sheet .mint {
    background: #f4faf6;
}

.sheet .selected {
    position: relative;
    overflow: visible;
}

.sel-box {
    position: absolute;
    left: -2px;
    top: -2px;
    right: -2px;
    bottom: -1px;
    border: 2px solid #217346;
}

.sel-box i {
    position: absolute;
    right: -4px;
    bottom: -4px;
    width: 6px;
    height: 6px;
    background: #217346;
    border: 1px solid #fff;
}

/* scrollbars */
.vscroll {
    width: 15px;
    margin-left: 3px;
    padding-top: 3px;
    display: flex;
    flex-direction: column;
    gap: 1px;
}

.sb-btn {
    flex: none;
    width: 15px;
    height: 15px;
    display: flex;
    align-items: center;
    justify-content: center;
    background: #fff;
    border: 1px solid #ababab;
}

.sb-btn.wide {
    width: 16px;
}

.sb-thumb {
    height: 325px;
    background: #fff;
    border: 1px solid #ababab;
}

.sb-rest {
    flex: 1;
    background: #dcdcdc;
}

.tri {
    display: block;
    width: 0;
    height: 0;
    border: 4px solid transparent;
}

.tri.up {
    border-top: 0;
    border-bottom: 4px solid #6a6a6a;
}

.tri.down {
    border-bottom: 0;
    border-top: 4px solid #6a6a6a;
}

.tri.left {
    border-left: 0;
    border-right: 4px solid #6a6a6a;
}

.tri.right {
    border-right: 0;
    border-left: 4px solid #6a6a6a;
}

.tri.left.pale { border-right-color: #bdbdbd; }
.tri.right.pale { border-left-color: #bdbdbd; }

/* sheet tabs */
.sheet-tabs {
    height: 28px;
    display: flex;
    align-items: flex-start;
    background: #e6e6e6;
    border-top: 1px solid #ababab;
    border-bottom: 1px solid #d0d0d0;
}

.nav-l {
    margin: 9px 0 0 19px;
}

.nav-r {
    margin: 9px 0 0 25px;
}

.sheet-tab {
    width: 66px;
    height: 25px;
    margin-left: 40px;
    margin-top: -1px;
    background: #fff;
    border-left: 1px solid #ababab;
    border-right: 1px solid #ababab;
    border-bottom: 2px solid #217346;
    color: #217346;
    text-align: center;
    line-height: 22px;
    font-size: 12px;
}

.add-sheet {
    margin: 4px 0 0 32px;
}

.tab-dots {
    margin: 7px 0 0 603px;
}

.hscroll {
    width: 512px;
    margin: 6px 0 0 14px;
    display: flex;
}

.h-thumb {
    width: 448px;
    height: 15px;
    background: #fff;
    border: 1px solid #ababab;
}

.h-rest {
    width: 31px;
    height: 15px;
    margin-right: 1px;
    background: #d8d8d8;
}

/* status bar */
.statusbar {
    height: 22px;
    display: flex;
    align-items: stretch;
    background: #f1f1f1;
    line-height: 22px;
}

.ready {
    margin-left: -1px;
}

.views {
    margin-left: auto;
    display: flex;
}

.view {
    width: 38px;
    display: flex;
    align-items: center;
    justify-content: center;
}

.view.on {
    background: #c6c6c6;
}

.zoom {
    width: 176px;
    padding-left: 5px;
    display: flex;
    align-items: center;
}

.minus {
    width: 6px;
    height: 2px;
    background: #666;
}

.slider {
    position: relative;
    width: 100px;
    height: 1px;
    margin: 0 4px;
    background: #a0a0a0;
}

.slider b {
    position: absolute;
    left: 48px;
    top: -5px;
    width: 5px;
    height: 11px;
    background: #7f7f7f;
}

.plus {
    position: relative;
    width: 7px;
    height: 2px;
    background: #666;
}

.plus::after {
    content: "";
    position: absolute;
    left: 2.5px;
    top: -3px;
    width: 2px;
    height: 8px;
    background: #666;
}

.zoom span {
    margin-left: 12px;
    color: #555;
}

/* desktop taskbar */
.taskbar {
    height: 8px;
    display: flex;
    overflow: hidden;
    background: linear-gradient(90deg, #21404a, #1c2f45);
}

.task-search {
    width: 343px;
    height: 8px;
    margin-left: 40px;
    background: #e8e8e8;
    border-left: 1px solid #bbb;
}

.clock {
    margin-left: auto;
    margin-right: 62px;
    padding-top: 1px;
    color: #fff;
    font-size: 12px;
    line-height: 16px;
}

/* the red mark over the filter button */
.red-box {
    position: absolute;
    left: 540px;
    top: 46px;
    width: 55px;
    height: 90px;
    border: 3px solid #f00;
}
```
